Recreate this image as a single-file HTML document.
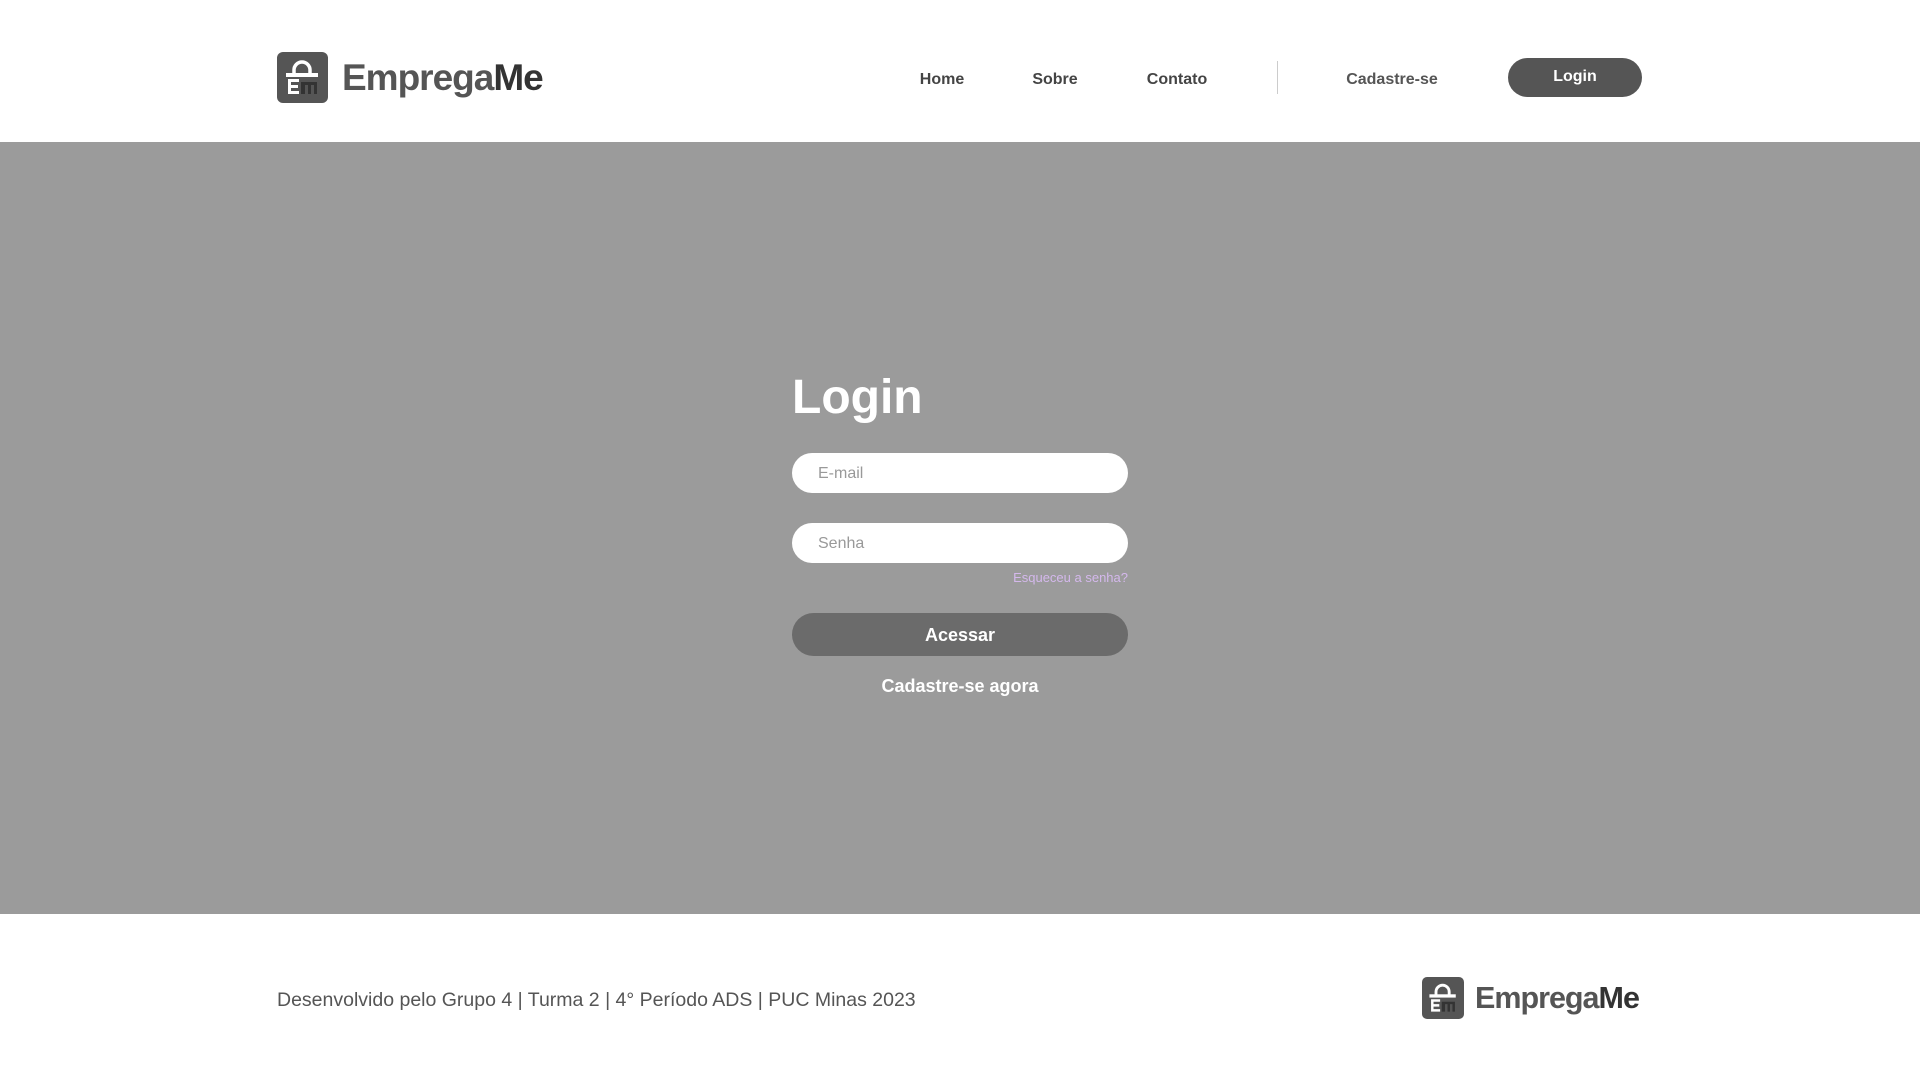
<!DOCTYPE html>
<html><head><meta charset="utf-8"><style>
*{margin:0;padding:0;box-sizing:border-box}
body{width:1920px;height:1083px;background:#fff;font-family:"Liberation Sans",sans-serif;position:relative;overflow:hidden}
.abs{position:absolute}
.band{left:0;top:142px;width:1920px;height:772px;background:#9b9b9b}
.logo{display:flex;align-items:center}
.logotext{font-weight:bold;color:#555;letter-spacing:-1px}
.logotext b{color:#333}
.nav{font-size:16px;font-weight:bold;color:#444;top:71px;transform:translateX(-50%)}
.inp{left:792px;width:336px;height:40px;background:#fff;border-radius:20px;color:#999;font-size:16px;padding-left:26px;line-height:42px}
</style></head><body>
<div class="abs logo" style="left:277px;top:52px">
<svg width="51" height="51" viewBox="0 0 51 51"><rect width="51" height="51" rx="6" fill="#555"/><path d="M17 22v-4a8 8 0 0 1 16 0v4" stroke="#fff" stroke-width="3.5" fill="none"/><rect x="9" y="21" width="32" height="4" fill="#fff"/><path d="M11 27h11v3h-8v3h7v3h-7v3h8v3H11z" fill="#fff"/><path d="M24 30h16v12h-3v-9h-3v9h-3v-9h-3v9h-4z" fill="#333"/></svg>
<span class="logotext" style="font-size:37px;margin-left:14px">Emprega<b>Me</b></span></div>
<div class="abs nav" style="left:942px">Home</div>
<div class="abs nav" style="left:1055px">Sobre</div>
<div class="abs nav" style="left:1177px">Contato</div>
<div class="abs" style="left:1277px;top:61px;width:1px;height:33px;background:#ccc"></div>
<div class="abs nav" style="left:1392px;color:#555">Cadastre-se</div>
<div class="abs" style="left:1508px;top:58px;width:134px;height:39px;border-radius:20px;background:#555;color:#fff;font-weight:bold;font-size:16px;text-align:center;line-height:38px">Login</div>
<div class="abs band"></div>
<div class="abs" style="left:792px;top:370px;font-size:48px;font-weight:bold;color:#fff">Login</div>
<div class="abs inp" style="top:453px">E-mail</div>
<div class="abs inp" style="top:523px">Senha</div>
<div class="abs" style="left:792px;width:336px;top:570px;text-align:right;font-size:13px;color:#d4b8ec">Esqueceu a senha?</div>
<div class="abs" style="left:792px;top:613px;width:336px;height:43px;border-radius:22px;background:#6b6b6b;color:#fff;font-weight:bold;font-size:18px;text-align:center;line-height:45px">Acessar</div>
<div class="abs" style="left:792px;width:336px;top:676px;text-align:center;font-size:18px;font-weight:bold;color:#fff">Cadastre-se agora</div>
<div class="abs" style="left:277px;top:989px;font-size:19.5px;color:#555">Desenvolvido pelo Grupo 4 | Turma 2 | 4° Período ADS | PUC Minas 2023</div>
<div class="abs logo" style="left:1422px;top:977px">
<svg width="42" height="42" viewBox="0 0 51 51"><rect width="51" height="51" rx="6" fill="#555"/><path d="M17 22v-4a8 8 0 0 1 16 0v4" stroke="#fff" stroke-width="3.5" fill="none"/><rect x="9" y="21" width="32" height="4" fill="#fff"/><path d="M11 27h11v3h-8v3h7v3h-7v3h8v3H11z" fill="#fff"/><path d="M24 30h16v12h-3v-9h-3v9h-3v-9h-3v9h-4z" fill="#333"/></svg>
<span class="logotext" style="font-size:30.5px;margin-left:11px">Emprega<b>Me</b></span></div>
</body></html>
